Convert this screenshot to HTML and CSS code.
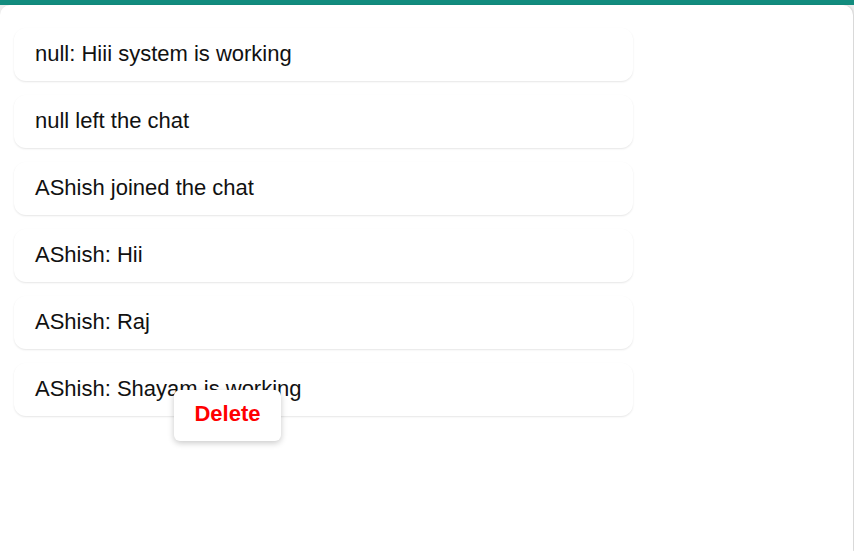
FILE: index.html
```html
<!DOCTYPE html>
<html>
<head>
<meta charset="utf-8">
<link rel="stylesheet" href="styles.css">
</head>
<body>
<div class="topbar"></div>
<div class="chat">
  <div class="list">
    <div class="msg">null: Hiii system is working</div>
    <div class="msg">null left the chat</div>
    <div class="msg">AShish joined the chat</div>
    <div class="msg">AShish: Hii</div>
    <div class="msg">AShish: Raj</div>
    <div class="msg last">AShish: Shayam is working
      <div class="menu">Delete</div>
    </div>
  </div>
</div>
</body>
</html>
```
FILE: styles.css
```css
html, body {
  margin: 0;
  padding: 0;
  height: 100%;
}
body {
  background: #eeeeee;
  font-family: "Liberation Sans", Arial, sans-serif;
  display: flex;
  flex-direction: column;
  overflow: hidden;
}
.topbar {
  height: 5px;
  background: #128c7e;
  flex: none;
}
.chat {
  flex: 1;
  background: #ffffff;
  border-radius: 10px 10px 0 0;
  box-shadow: 1px 0 2px rgba(0,0,0,0.12);
  margin-right: 1px;
  padding: 23px 14px;
}
.list {
  width: 619px;
  display: flex;
  flex-direction: column;
  gap: 14px;
}
.msg {
  position: relative;
  background: #ffffff;
  border-radius: 12px;
  box-shadow: 0 1px 2px rgba(0,0,0,0.1);
  padding: 13px 21px 15px;
  font-size: 22px;
  line-height: 25px;
  color: #111;
}
.menu {
  position: absolute;
  left: 160px;
  top: 27px;
  width: 107px;
  height: 51px;
  box-sizing: border-box;
  padding-bottom: 5px;
  background: #fff;
  border-radius: 6px;
  box-shadow: 0 2px 6px rgba(0,0,0,0.22);
  color: #ff0000;
  font-weight: bold;
  font-size: 22px;
  display: flex;
  align-items: center;
  justify-content: center;
}
```
